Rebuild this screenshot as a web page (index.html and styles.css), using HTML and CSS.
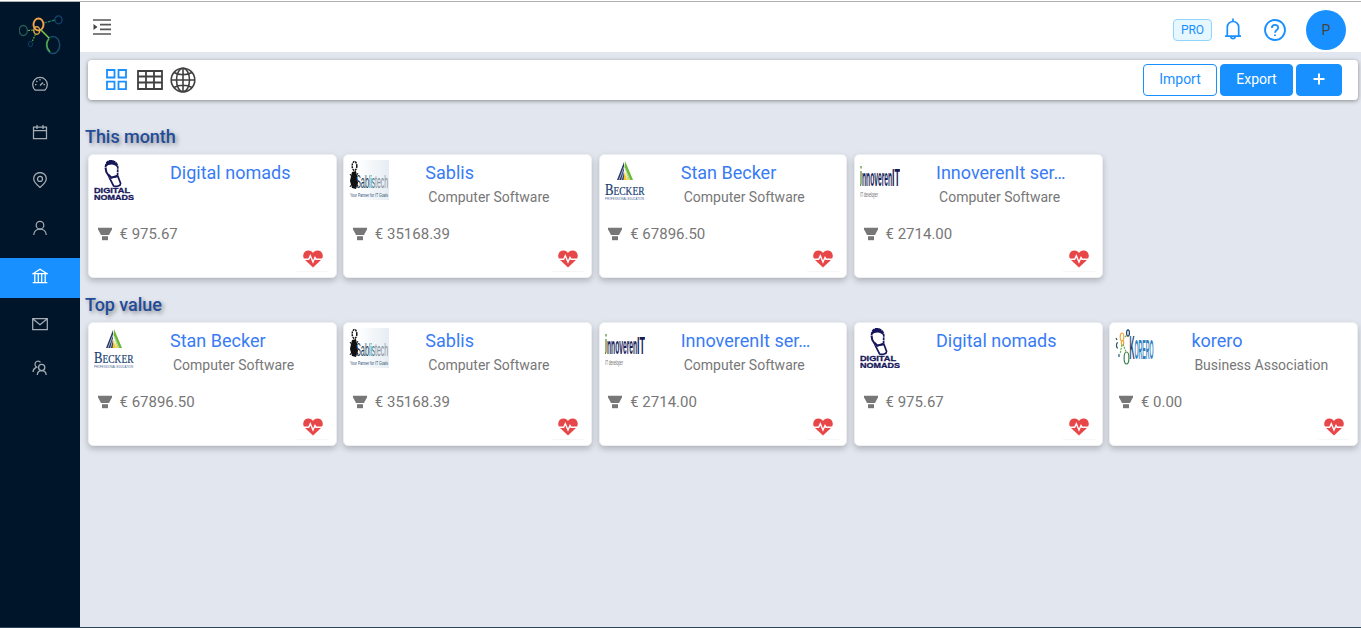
FILE: index.html
```html
<!DOCTYPE html>
<html lang="en">
<head>
<meta charset="utf-8">
<title>Companies</title>
<link rel="stylesheet" href="styles.css">
</head>
<body>
<svg class="sprite" aria-hidden="true">
  <symbol id="funnel" viewBox="0 0 14 14"><path d="M0 .8h14v1.500L11 8H3L0 2.300z" fill="#777"/><path d="M4 9.200h6v4H4z" fill="#777"/></symbol>
  <symbol id="heart" viewBox="0 0 20 18"><path d="M10 17.6 1.500 9.400C-1 6.600.1 1 5 .5 7.600 .3 9 1.700 10 3 11 1.700 12.400 .3 15 .5 19.900 1 21 6.600 18.500 9.400z" fill="#e84749"/><path d="M0 9.200h5.700l1.600-3.400 2.700 6.200 2-4.500 1 1.700h7" fill="none" stroke="#fff" stroke-width="1.400"/></symbol>
  <symbol id="nomads" viewBox="0 0 40 40">
    <path d="M11.500 7C12 2 14.500 .8 17 .8c4 0 6.500 3 6.800 7l-.3 8" fill="none" stroke="#16165a" stroke-width="1.700" stroke-dasharray="3 .6"/>
    <path d="M11.500 7.500l.8 4.500 3.200 5" fill="none" stroke="#16165a" stroke-width="2"/>
    <path d="M11.500 7c0-9 11.500-9 12.300 1-2.500-4-8-5-12.300-1z" fill="#16165a"/>
    <path d="M14.500 14.500l3 3.200 6-2" fill="none" stroke="#16165a" stroke-width="1.800"/>
    <path d="M15.500 18l8.500-1.500 2.600 7c0 2.500-4 3.500-7 2.500z" fill="none" stroke="#16165a" stroke-width="1.700"/>
    <text x="0" y="33.300" textLength="36" lengthAdjust="spacingAndGlyphs" class="nomads-text">DIGITAL</text>
    <text x="0" y="40" textLength="40" lengthAdjust="spacingAndGlyphs" class="nomads-text">NOMADS</text>
  </symbol>
  <symbol id="sablis" viewBox="0 0 40 40">
    <ellipse cx="5.500" cy="6" rx="2.300" ry="4.500" fill="none" stroke="#111" stroke-width="1.500" stroke-dasharray="2 .8"/>
    <path d="M3 12l4-1 1 5 1 7-2 6-4-1-2-7 1-5z" fill="#111"/><path d="M1 14l8 12M9 13L1 27" stroke="#111"/>
    <text x="7" y="28" textLength="13" lengthAdjust="spacingAndGlyphs" class="sablis-text dark">Sab</text>
    <text x="20" y="28" textLength="6" lengthAdjust="spacingAndGlyphs" class="sablis-text teal">lis</text>
    <text x="26" y="28" textLength="13" lengthAdjust="spacingAndGlyphs" class="sablis-text grey">tech</text>
    <text x="1" y="37" textLength="38" lengthAdjust="spacingAndGlyphs" class="sablis-sub">Your Partner for IT Goals</text>
  </symbol>
  <symbol id="becker" viewBox="0 0 40 40">
    <path d="M19 2v18h-7z" fill="#25396b"/><path d="M20 1l8 19h-4L19.500 8z" fill="#69b82f"/><path d="M19.500 11l4 9h-5z" fill="#f2c525"/><path d="M14 20l5-13M16.500 20L19 11M22 20l-2.500-9M25 20L20 8" stroke="#fff" stroke-width=".6"/>
    <text x="0" y="34.500" textLength="8.500" lengthAdjust="spacingAndGlyphs" class="becker-text becker-cap">B</text>
    <text x="8.500" y="34.500" textLength="31" lengthAdjust="spacingAndGlyphs" class="becker-text">ECKER</text>
    <text x="0" y="39.500" textLength="39" lengthAdjust="spacingAndGlyphs" class="becker-sub">PROFESSIONAL EDUCATION</text>
  </symbol>
  <symbol id="innoveren" viewBox="0 0 40 40">
    <path d="M1 6v2.500M1 11v13l-1 2" stroke="#4f8b2c" stroke-width="1.200" fill="none"/>
    <text x="2" y="26" textLength="30" lengthAdjust="spacingAndGlyphs" class="inno-text">nnoveren</text>
    <text x="32" y="26" textLength="8" lengthAdjust="spacingAndGlyphs" class="inno-text">IT</text>
    <text x="0" y="37" textLength="18" lengthAdjust="spacingAndGlyphs" class="inno-sub">IT developer</text>
  </symbol>
  <symbol id="korero" viewBox="0 0 40 40">
    <g fill="none" stroke-width="1.200"><ellipse cx="7" cy="9" rx="1.800" ry="4" stroke="#f0a63b"/><ellipse cx="7.500" cy="15" rx="1.200" ry="2.500" stroke="#f0a63b"/><ellipse cx="13" cy="5" rx="1.400" ry="3.200" stroke="#173e68"/><ellipse cx="11.500" cy="30" rx="2.400" ry="6" stroke="#3b8350"/><path d="M8 16l3 8M7 17l-2 9M10 9l2-2" stroke="#6db148" stroke-dasharray="2 1"/><path d="M4 26v3M3 15c-2-1-2 5 0 5M1 10l1 2" stroke="#235876"/></g>
    <text x="14.500" y="31" textLength="5" lengthAdjust="spacingAndGlyphs" class="korero-k">K</text>
    <text x="19.500" y="31" textLength="19" lengthAdjust="spacingAndGlyphs" class="korero-text">ORERO</text>
  </symbol>
</svg>

<div class="app">
  <nav class="sidebar">
    <svg class="brand" viewBox="0 0 44 40">
      <g fill="none"><ellipse cx="4.300" cy="15.500" rx="4" ry="5" stroke="#226055" stroke-width="1.300"/><ellipse cx="39.500" cy="4.800" rx="3.600" ry="4" stroke="#144471" stroke-width="1.300"/><ellipse cx="11.500" cy="29" rx="2" ry="2.600" stroke="#11416b"/><ellipse cx="34" cy="30" rx="6.700" ry="8.500" stroke="#164d68" stroke-width="1.500"/><path d="M30 23.500c-3 4-3 9 1 13.500" stroke="#56a845" stroke-width="1.500"/><ellipse cx="19.500" cy="9.500" rx="5" ry="6" stroke="#f3a64c" stroke-width="1.900"/><ellipse cx="17.800" cy="15.500" rx="3" ry="3.800" stroke="#e9a54b" stroke-width="1.400"/><path d="M22 15l8 8" stroke="#79c743" stroke-width="1.600"/><path d="M25 8l11-3" stroke="#2a7f60" stroke-width="1.200" stroke-dasharray="3 1"/><path d="M9 15.500l6-.5M16.500 19l-3 7" stroke="#6aa844" stroke-width="1.200" stroke-dasharray="2 1"/></g>
    </svg>
    <a class="item"><svg class="icon" viewBox="0 0 16 16"><path d="M3.200 14.200A7.300 7.300 0 1 1 12.800 14.200z"/><path d="M8 9.500l3-3M8 3v1.500M3 8.500h1.500M11.500 8.500H13M4.300 5l1 1"/></svg></a>
    <a class="item"><svg class="icon" viewBox="0 0 16 16"><path d="M1.500 3h13v11.500h-13zM1.500 6.500h13M5 1v4M11 1v4"/></svg></a>
    <a class="item"><svg class="icon" viewBox="0 0 16 16"><path d="M8 15.400C4.500 12.500 1.700 10 1.700 6.700a6.300 6.200 0 0 1 12.600 0C14.300 10 11.500 12.500 8 15.400z"/><circle cx="8" cy="6.900" r="2.500"/></svg></a>
    <a class="item"><svg class="icon" viewBox="0 0 16 16"><circle cx="8" cy="5.200" r="3.800"/><path d="M1.700 15c.2-3.500 2.700-6 6.300-6s6.100 2.500 6.300 6"/></svg></a>
    <a class="item active"><svg class="icon" viewBox="0 0 16 16"><path d="M1 5.700L8 1.200l7 4.500zM.7 14.500h14.600M2.800 6v8.500M6.300 6v8.500M9.700 6v8.500M13.200 6v8.500"/></svg></a>
    <a class="item"><svg class="icon" viewBox="0 0 16 16"><path d="M.7 2.500h14.600v11.200H.7zM1 3l7 5.700L15 3"/></svg></a>
    <a class="item team"><svg class="icon" viewBox="0 0 16 16"><circle cx="9.700" cy="7.400" r="3.100"/><path d="M5.300 15c.1-2.700 1.700-4.500 4.400-4.500s4.300 1.800 4.500 4.500M8.500 2.300C6.800 0 3 1.200 3 4.200c0 1.300.6 2.300 1.600 2.900C2.300 8 1.200 9.500 1 12"/></svg></a>
  </nav>

  <div class="page">
    <header class="header">
      <svg class="menu" viewBox="0 0 18 16"><path d="M0 1h18M7 5.700h11M7 10.300h11M0 15h18" stroke="#555" stroke-width="1.700"/><path d="M.5 5l4 3-4 3z" fill="#444"/></svg>
      <div class="account">
        <span class="plan">PRO</span>
        <svg class="bell" viewBox="0 0 18 22"><path d="M1 18.200h16M3.300 18V9.200a5.700 5.700 0 0 1 11.400 0V18M9 .5v3M6.700 19a2.400 2.300 0 0 0 4.600 0"/></svg>
        <svg class="help" viewBox="0 0 22 22"><circle cx="11" cy="11" r="10"/><path d="M7.900 8.900c0-4 6.300-4 6.300-.2 0 2.500-3.100 2.200-3.100 5M11 15.500v1.500"/></svg>
        <span class="avatar">P</span>
      </div>
    </header>

    <main class="content">
      <div class="toolbar">
        <div class="views">
          <svg class="view-grid" viewBox="0 0 22 22"><path d="M1 1h7.500v7.500H1zM12.500 1H20v7.500h-7.500zM1 12.700h7.500v7.500H1zM12.500 12.700H20v7.500h-7.500z" fill="none" stroke="#1890ff" stroke-width="1.800"/></svg>
          <svg class="view-table" viewBox="0 0 26 20"><path d="M1 1h24v18H1zM1 6.500h24M1 12.500h24M9 1v18M17 1v18" fill="none" stroke="#404040" stroke-width="1.800"/></svg>
          <svg class="view-globe" viewBox="0 0 26 26"><g fill="none" stroke="#404040" stroke-width="1.600"><circle cx="13" cy="13" r="11.800"/><ellipse cx="13" cy="13" rx="6.500" ry="11.800"/><path d="M13 1v24M1 13h24M4 5.500c5 3 13 3 18 0M4 20.500c5-3 13-3 18 0"/></g></svg>
        </div>
        <div class="actions">
          <button class="btn outline">Import</button>
          <button class="btn">Export</button>
          <button class="btn add"><svg class="plus" viewBox="0 0 12 12"><path d="M6 .5v11M.5 6h11" stroke="#fff" stroke-width="2"/></svg></button>
        </div>
      </div>

      <h2 class="heading">This month</h2>
      <section class="cards">
        <article class="card"><div class="top"><svg class="logo"><use href="#nomads"/></svg><div class="info"><h3 class="name">Digital nomads</h3></div></div><div class="value"><svg class="funnel"><use href="#funnel"/></svg>€ 975.67</div><div class="health"><svg class="heart"><use href="#heart"/></svg></div></article>
        <article class="card"><div class="top"><svg class="logo shaded"><use href="#sablis"/></svg><div class="info"><h3 class="name">Sablis</h3><p class="sector">Computer Software</p></div></div><div class="value"><svg class="funnel"><use href="#funnel"/></svg>€ 35168.39</div><div class="health"><svg class="heart"><use href="#heart"/></svg></div></article>
        <article class="card"><div class="top"><svg class="logo"><use href="#becker"/></svg><div class="info"><h3 class="name">Stan Becker</h3><p class="sector">Computer Software</p></div></div><div class="value"><svg class="funnel"><use href="#funnel"/></svg>€ 67896.50</div><div class="health"><svg class="heart"><use href="#heart"/></svg></div></article>
        <article class="card"><div class="top"><svg class="logo"><use href="#innoveren"/></svg><div class="info"><h3 class="name">InnoverenIt ser…</h3><p class="sector">Computer Software</p></div></div><div class="value"><svg class="funnel"><use href="#funnel"/></svg>€ 2714.00</div><div class="health"><svg class="heart"><use href="#heart"/></svg></div></article>
      </section>

      <h2 class="heading">Top value</h2>
      <section class="cards">
        <article class="card"><div class="top"><svg class="logo"><use href="#becker"/></svg><div class="info"><h3 class="name">Stan Becker</h3><p class="sector">Computer Software</p></div></div><div class="value"><svg class="funnel"><use href="#funnel"/></svg>€ 67896.50</div><div class="health"><svg class="heart"><use href="#heart"/></svg></div></article>
        <article class="card"><div class="top"><svg class="logo shaded"><use href="#sablis"/></svg><div class="info"><h3 class="name">Sablis</h3><p class="sector">Computer Software</p></div></div><div class="value"><svg class="funnel"><use href="#funnel"/></svg>€ 35168.39</div><div class="health"><svg class="heart"><use href="#heart"/></svg></div></article>
        <article class="card"><div class="top"><svg class="logo"><use href="#innoveren"/></svg><div class="info"><h3 class="name">InnoverenIt ser…</h3><p class="sector">Computer Software</p></div></div><div class="value"><svg class="funnel"><use href="#funnel"/></svg>€ 2714.00</div><div class="health"><svg class="heart"><use href="#heart"/></svg></div></article>
        <article class="card"><div class="top"><svg class="logo"><use href="#nomads"/></svg><div class="info"><h3 class="name">Digital nomads</h3></div></div><div class="value"><svg class="funnel"><use href="#funnel"/></svg>€ 975.67</div><div class="health"><svg class="heart"><use href="#heart"/></svg></div></article>
        <article class="card"><div class="top"><svg class="logo"><use href="#korero"/></svg><div class="info"><h3 class="name">korero</h3><p class="sector">Business Association</p></div></div><div class="value"><svg class="funnel"><use href="#funnel"/></svg>€ 0.00</div><div class="health"><svg class="heart"><use href="#heart"/></svg></div></article>
      </section>
    </main>
  </div>
</div>
</body>
</html>
```
FILE: styles.css
```css
* { box-sizing: border-box; }
body { margin: 0; font-family: Roboto, "Liberation Sans", sans-serif; font-size: 14px; color: #777; background: #fff; }
svg { display: block; flex: none; }
h2, h3, p { margin: 0; font-weight: 400; }
.sprite { display: none; }

.app { display: flex; height: 628px; padding-top: 1px; border-bottom: 1px solid #2f4558; overflow: hidden; }
.app::before { content: ""; position: absolute; top: 1px; left: 0; right: 0; height: 1px; background: #b0b0b0; }

.sidebar { width: 80px; flex: none; display: flex; flex-direction: column; align-items: stretch; gap: 8px; background: #001529; padding-top: 14px; }
.brand { width: 44px; height: 40px; margin: 0 0 3px 19px; }
.item { height: 40px; flex: none; display: flex; align-items: center; justify-content: center; padding-bottom: 4px; color: #a6adb4; }
.item.active { background: #1890ff; color: #fff; }
.item.team { margin-top: -4px; }
.icon { width: 16px; height: 16px; fill: none; stroke: currentColor; stroke-width: 1.250; }

.page { flex: 1; display: flex; flex-direction: column; min-width: 0; }
.header { height: 51px; flex: none; background: #fff; display: flex; justify-content: space-between; padding: 0 15px 0 13px; }
.menu { width: 18px; height: 16px; margin-top: 18px; }
.account { display: flex; align-items: center; margin-top: 6px; }
.plan { height: 22px; width: 39px; margin-right: 12px; display: flex; align-items: center; justify-content: center; font-size: 12px; color: #1890ff; background: #e6f7ff; border: 1px solid #91d5ff; border-radius: 4px; }
.bell { width: 18px; height: 22px; margin: -2px 22px 0 0; fill: none; stroke: #1890ff; stroke-width: 1.700; }
.help { width: 22px; height: 22px; margin-right: 20px; fill: none; stroke: #1890ff; stroke-width: 1.800; }
.avatar { width: 40px; height: 40px; border-radius: 50%; background: #1890ff; color: #444; display: flex; align-items: center; justify-content: center; }

.content { flex: 1; background: #e2e6ee; padding: 8px 3px 0 8px; }
.toolbar { height: 40px; display: flex; justify-content: space-between; align-items: center; padding: 0 16px 0 18px; background: #fff; border-radius: 4px; box-shadow: 0 1px 4px rgba(0, 0, 0, .4); }
.views { display: flex; align-items: center; gap: 9px; margin-bottom: 1px; }
.view-grid { width: 22px; height: 22px; }
.view-table { width: 26px; height: 20px; }
.view-globe { width: 26px; height: 26px; margin-left: -2.500px; }
.actions { display: flex; gap: 3px; }
.btn { width: 73px; height: 32px; padding: 0 0 2px; font: 400 14px Roboto, sans-serif; color: #fff; background: #1890ff; border: 1px solid #1890ff; border-radius: 4px; }
.btn.outline { width: 74px; color: #1890ff; background: #fff; }
.btn.add { width: 46px; display: flex; align-items: center; justify-content: center; }
.plus { width: 12px; height: 12px; }

.heading { margin: 26px 0 7px -3px; line-height: 21px; font-size: 18px; font-weight: 500; letter-spacing: -.05px; color: #224b99; text-shadow: 2px 2px 4px rgba(0, 0, 0, .4); }
.cards + .heading { margin-top: 16px; }
.cards { display: grid; grid-template-columns: repeat(5, 248.500px); gap: 6.850px; }
.card { height: 124px; display: flex; flex-direction: column; padding: 6px; background: #fff; border: 1px solid #eceef1; border-radius: 5px; box-shadow: 0 3px 6px rgba(0, 0, 0, .22); }
.top { height: 60px; display: flex; margin: -1px 0 0 -1px; }
.logo { width: 40px; height: 40px; }
.logo.shaded { background: linear-gradient(to right, #fff 20%, #e6edf3); }
.info { margin-left: 36px; }
.name { font-size: 18px; line-height: 26px; color: #387cf5; white-space: nowrap; }
.sector { padding-left: 3px; line-height: 22px; white-space: nowrap; }
.value { height: 28px; display: flex; align-items: center; padding-left: 2.500px; font-size: 15px; }
.funnel { width: 14px; height: 14px; margin-right: 8px; }
.health { width: 36px; height: 25px; display: flex; justify-content: center; margin: -2px -1px 0 auto; padding-top: 4px; border-radius: 4px; box-shadow: 0 2px 1px -1px rgba(0, 0, 0, .04); }
.heart { width: 20px; height: 18px; }

.nomads-text { font: 900 7.600px "Liberation Sans", sans-serif; fill: #16165a; stroke: #16165a; stroke-width: .3; }
.sablis-text { font: 19px "Liberation Sans", sans-serif; }
.dark { fill: #193d60; }
.teal { fill: #267995; }
.grey { fill: #888f96; }
.sablis-sub { font: 5px "Liberation Sans", sans-serif; fill: #245070; }
.becker-text { font: 13px "Liberation Serif", serif; fill: #173c70; stroke: #173c70; stroke-width: .2; }
.becker-cap { font-size: 17px; }
.becker-sub { font: 3px "Liberation Sans", sans-serif; fill: #4a6796; }
.inno-text { font: bold 24px "Liberation Sans", sans-serif; fill: #171c59; }
.inno-sub { font: 7px "Liberation Sans", sans-serif; fill: #666; }
.korero-k { font: bold 33px "Liberation Sans", sans-serif; fill: #174775; }
.korero-text { font: bold 27px "Liberation Sans", sans-serif; fill: #337fc1; }
```
